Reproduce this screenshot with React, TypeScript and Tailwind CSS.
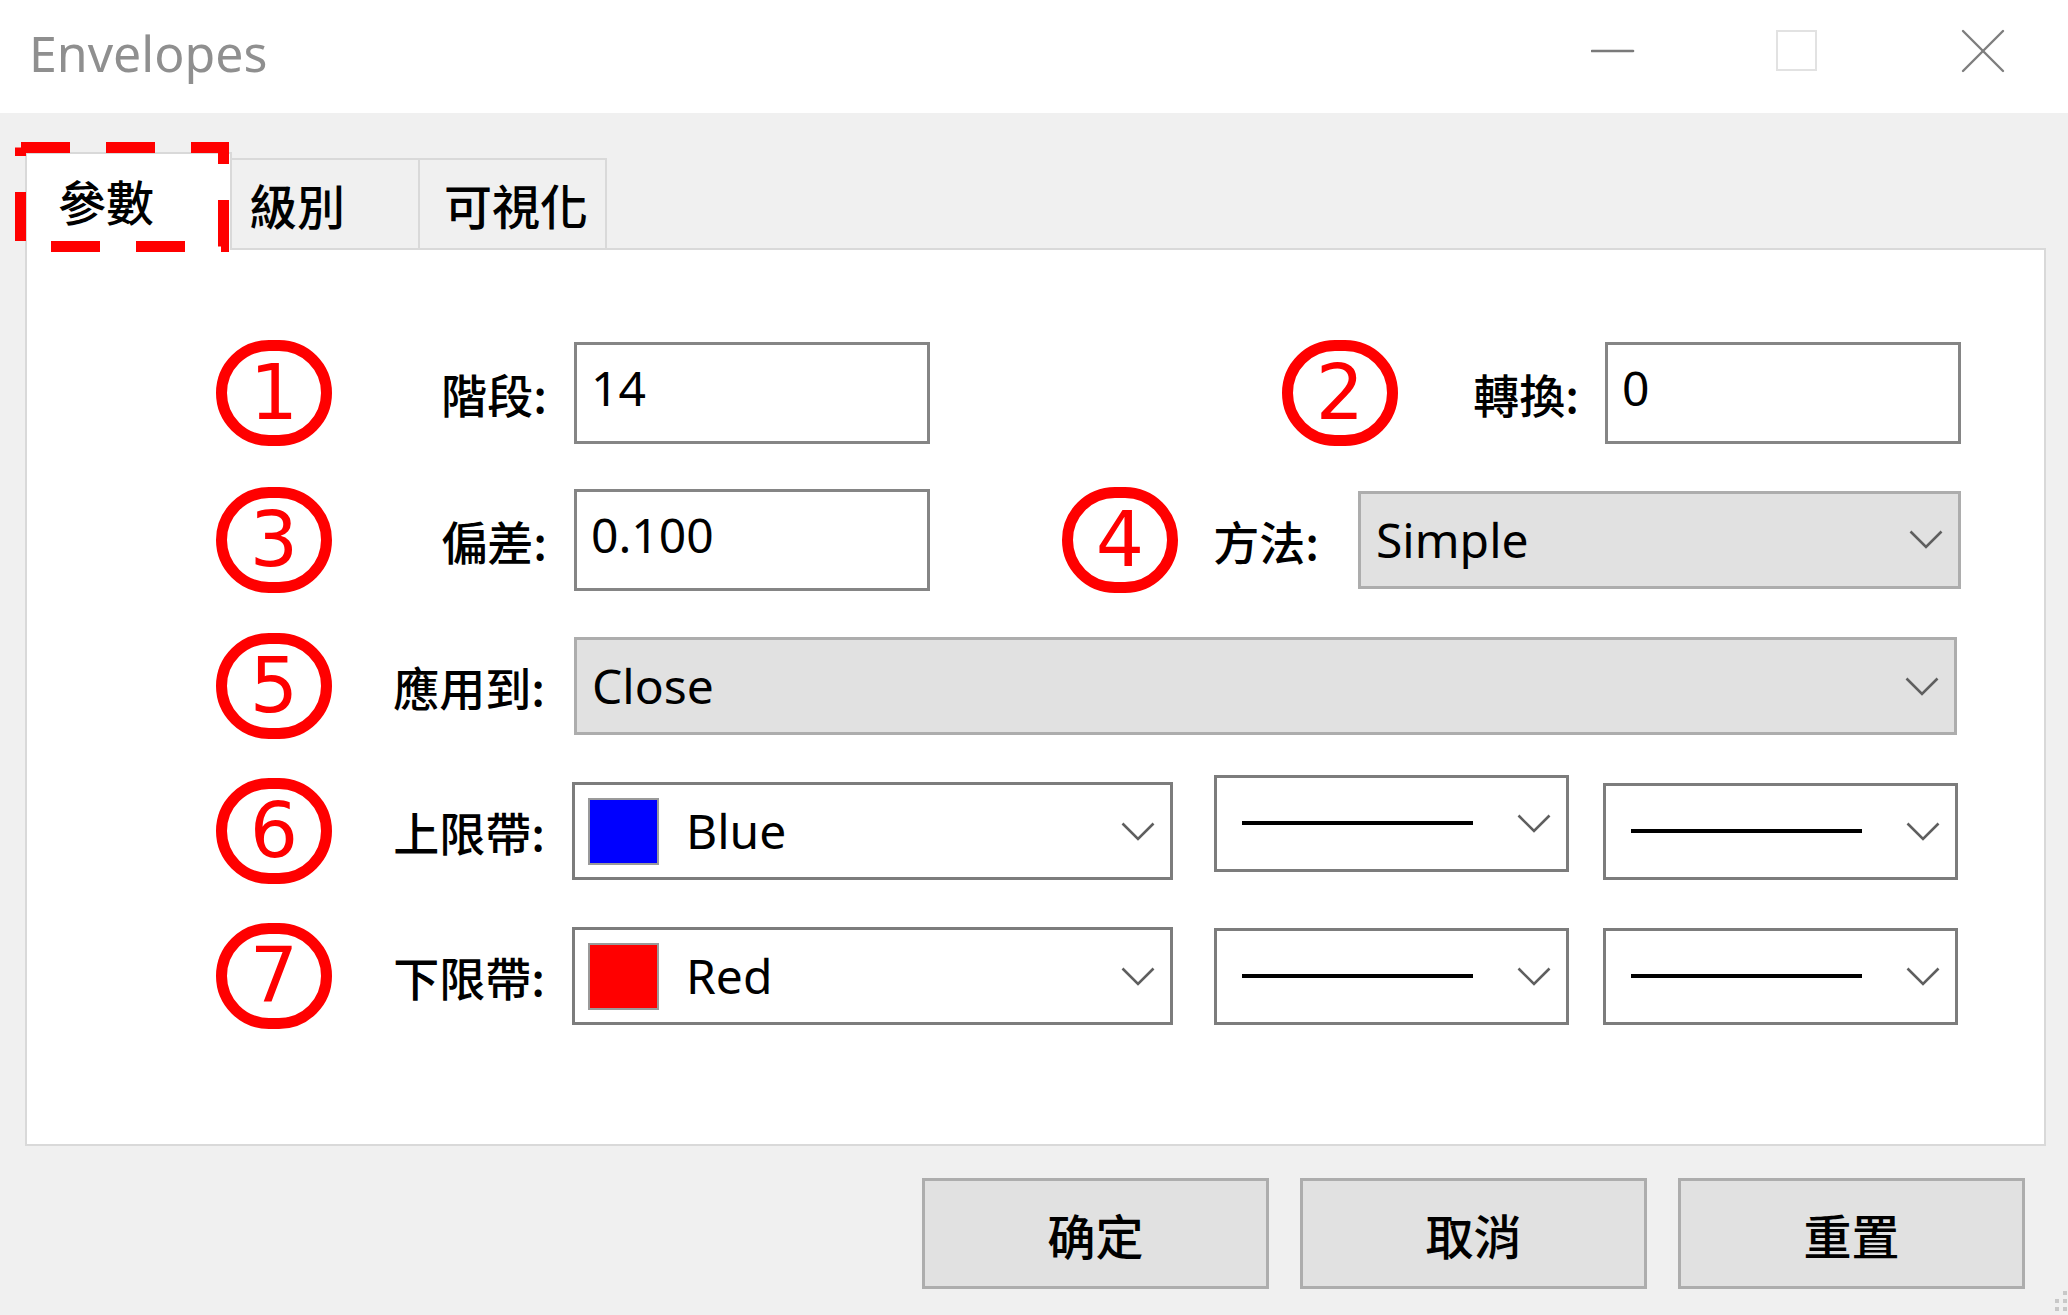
import type { ReactNode } from "react";

const latin = "font-['Noto_Sans','Noto_Sans_CJK_TC',sans-serif]";
const cjk = "font-['Noto_Sans_CJK_TC','Noto_Sans',sans-serif] font-medium";

function Chevron() {
  return (
    <svg width="34" height="19" viewBox="0 0 34 19" className="shrink-0">
      <polyline points="1.5,1.5 17,17 32.5,1.5" fill="none" stroke="#5f5f5f" strokeWidth="2.6" />
    </svg>
  );
}

function Mark({ n }: { n: string }) {
  return (
    <div className="flex h-[106px] w-[116px] shrink-0 items-center justify-center rounded-full border-[11px] border-[#ff0000]">
      <span className="font-['DejaVu_Sans',sans-serif] text-[76px] leading-none text-[#ff0000]">{n}</span>
    </div>
  );
}

function Label({ w, children }: { w: string; children: ReactNode }) {
  return <div className={`${w} shrink-0 text-right text-[46px] leading-none text-black ${cjk}`}>{children}</div>;
}

function TextBox({ value, className }: { value: string; className: string }) {
  return (
    <div className={`${className} h-[102px] shrink-0 border-[3px] border-[#858585] bg-white pl-[14px] pt-[19px] text-[48px] leading-none text-black ${latin}`}>
      {value}
    </div>
  );
}

function Dropdown({ className, children }: { className: string; children: ReactNode }) {
  return (
    <div className={`${className} flex shrink-0 items-center justify-between pr-[15px]`}>
      {children}
      <Chevron />
    </div>
  );
}

function ColorPick({ color, name }: { color: string; name: string }) {
  return (
    <Dropdown className="ml-[27px] h-[98px] w-[601px] border-[3px] border-[#7c7c7c] bg-white">
      <div className="flex items-center">
        <div className={`ml-[13px] h-[67px] w-[71px] border-2 border-[#9a9a9a] ${color}`} />
        <span className={`ml-[27px] text-[48px] leading-none text-black ${latin}`}>{name}</span>
      </div>
    </Dropdown>
  );
}

function LinePick({ className }: { className: string }) {
  return (
    <Dropdown className={`${className} h-[97px] w-[355px] border-[3px] border-[#7c7c7c] bg-white`}>
      <div className="ml-[25px] h-[4px] w-[231px] bg-black" />
    </Dropdown>
  );
}

function TabButton({ children, className }: { children: ReactNode; className: string }) {
  return <div className={`${className} flex shrink-0 items-center text-[48px] leading-none text-black ${cjk}`}>{children}</div>;
}

export default function App() {
  return (
    <div className="flex h-[1315px] w-[2068px] flex-col overflow-hidden bg-[#f0f0f0]">
      {/* title bar */}
      <div className="flex h-[113px] shrink-0 items-center bg-white">
        <span className={`ml-[29px] pb-[8px] text-[50px] leading-none text-[#8f8f8f] ${latin}`}>Envelopes</span>
        <div className="mb-[12px] ml-auto mr-[63px] flex items-center">
          <svg width="44" height="6" viewBox="0 0 44 6">
            <line x1="1" y1="3" x2="42" y2="3" stroke="#7a7a7a" strokeWidth="2.6" strokeLinecap="round" />
          </svg>
          <svg width="42" height="42" viewBox="0 0 42 42" className="ml-[141px]">
            <rect x="1" y="1" width="39" height="39" fill="none" stroke="#e2e2e2" strokeWidth="2" />
          </svg>
          <svg width="44" height="44" viewBox="0 0 44 44" className="ml-[143px]">
            <line x1="2" y1="2" x2="42" y2="42" stroke="#7e7e7e" strokeWidth="2.4" strokeLinecap="round" />
            <line x1="42" y1="2" x2="2" y2="42" stroke="#7e7e7e" strokeWidth="2.4" strokeLinecap="round" />
          </svg>
        </div>
      </div>

      {/* tabs */}
      <div className="relative z-10 flex h-[135px] shrink-0 items-end pl-[25px]">
        <TabButton className="-mb-[2px] h-[98px] w-[207px] border-x-2 border-t-2 border-[#d9d9d9] bg-white pb-[4px] pl-[31px]">
          參數
        </TabButton>
        <TabButton className="h-[90px] w-[188px] border-r-2 border-t-2 border-[#d9d9d9] pl-[17px]">級別</TabButton>
        <TabButton className="h-[90px] w-[187px] border-r-2 border-t-2 border-[#d9d9d9] pl-[24px]">可視化</TabButton>
        <svg width="214" height="110" viewBox="0 0 214 110" className="absolute left-[15px] top-[29px]">
          <path
            d="M6 5.5 H208.5 V104.5 H5.5 V5.5"
            fill="none"
            stroke="#ff0000"
            strokeWidth="11"
            strokeDasharray="49 36"
          />
        </svg>
      </div>

      {/* panel */}
      <div className="ml-[25px] flex h-[898px] w-[2021px] shrink-0 flex-col border-2 border-[#d9d9d9] bg-white pl-[189px] pt-[92px]">
        <div className="flex h-[102px] items-center">
          <Mark n="1" />
          <Label w="w-[215px]">階段:</Label>
          <TextBox value="14" className="ml-[27px] w-[356px]" />
          <div className="ml-[352px]">
            <Mark n="2" />
          </div>
          <Label w="w-[181px]">轉換:</Label>
          <TextBox value="0" className="ml-[26px] w-[356px]" />
        </div>

        <div className="mt-[44px] flex h-[103px] items-center">
          <Mark n="3" />
          <Label w="w-[215px]">偏差:</Label>
          <TextBox value="0.100" className="ml-[27px] w-[356px]" />
          <div className="ml-[132px]">
            <Mark n="4" />
          </div>
          <Label w="w-[141px]">方法:</Label>
          <Dropdown className="ml-[39px] h-[98px] w-[603px] border-[3px] border-[#adadad] bg-[#e1e1e1]">
            <span className={`pl-[15px] text-[48px] leading-none text-black ${latin}`}>Simple</span>
          </Dropdown>
        </div>

        <div className="mt-[46px] flex h-[98px] items-center">
          <Mark n="5" />
          <Label w="w-[213px]">應用到:</Label>
          <Dropdown className="ml-[29px] h-[98px] w-[1383px] border-[3px] border-[#adadad] bg-[#e1e1e1]">
            <span className={`pl-[15px] text-[48px] leading-none text-black ${latin}`}>Close</span>
          </Dropdown>
        </div>

        <div className="mt-[47px] flex h-[98px] items-center">
          <Mark n="6" />
          <Label w="w-[213px]">上限帶:</Label>
          <ColorPick color="bg-[#0000ff]" name="Blue" />
          <div className="-mt-[16px]">
            <LinePick className="ml-[41px]" />
          </div>
          <LinePick className="ml-[34px]" />
        </div>

        <div className="mt-[47px] flex h-[98px] items-center">
          <Mark n="7" />
          <Label w="w-[213px]">下限帶:</Label>
          <ColorPick color="bg-[#ff0000]" name="Red" />
          <LinePick className="ml-[41px]" />
          <LinePick className="ml-[34px]" />
        </div>
      </div>

      {/* buttons */}
      <div className="mt-[32px] flex flex-1 justify-end">
        <div className="mr-[25px] flex gap-[31px]">
          {["确定", "取消", "重置"].map((t) => (
            <div
              key={t}
              className={`flex h-[111px] w-[347px] items-center justify-center border-[3px] border-[#adadad] bg-[#e1e1e1] text-[48px] leading-none text-black ${cjk}`}
            >
              {t}
            </div>
          ))}
        </div>
        <svg width="18" height="26" viewBox="0 0 18 26" className="self-end">
          <rect x="13" y="2" width="4" height="4" fill="#c8c8c8" />
          <rect x="13" y="10" width="4" height="4" fill="#c8c8c8" />
          <rect x="5" y="10" width="4" height="4" fill="#c8c8c8" />
          <rect x="13" y="18" width="4" height="4" fill="#c8c8c8" />
          <rect x="5" y="18" width="4" height="4" fill="#c8c8c8" />
        </svg>
      </div>
    </div>
  );
}
